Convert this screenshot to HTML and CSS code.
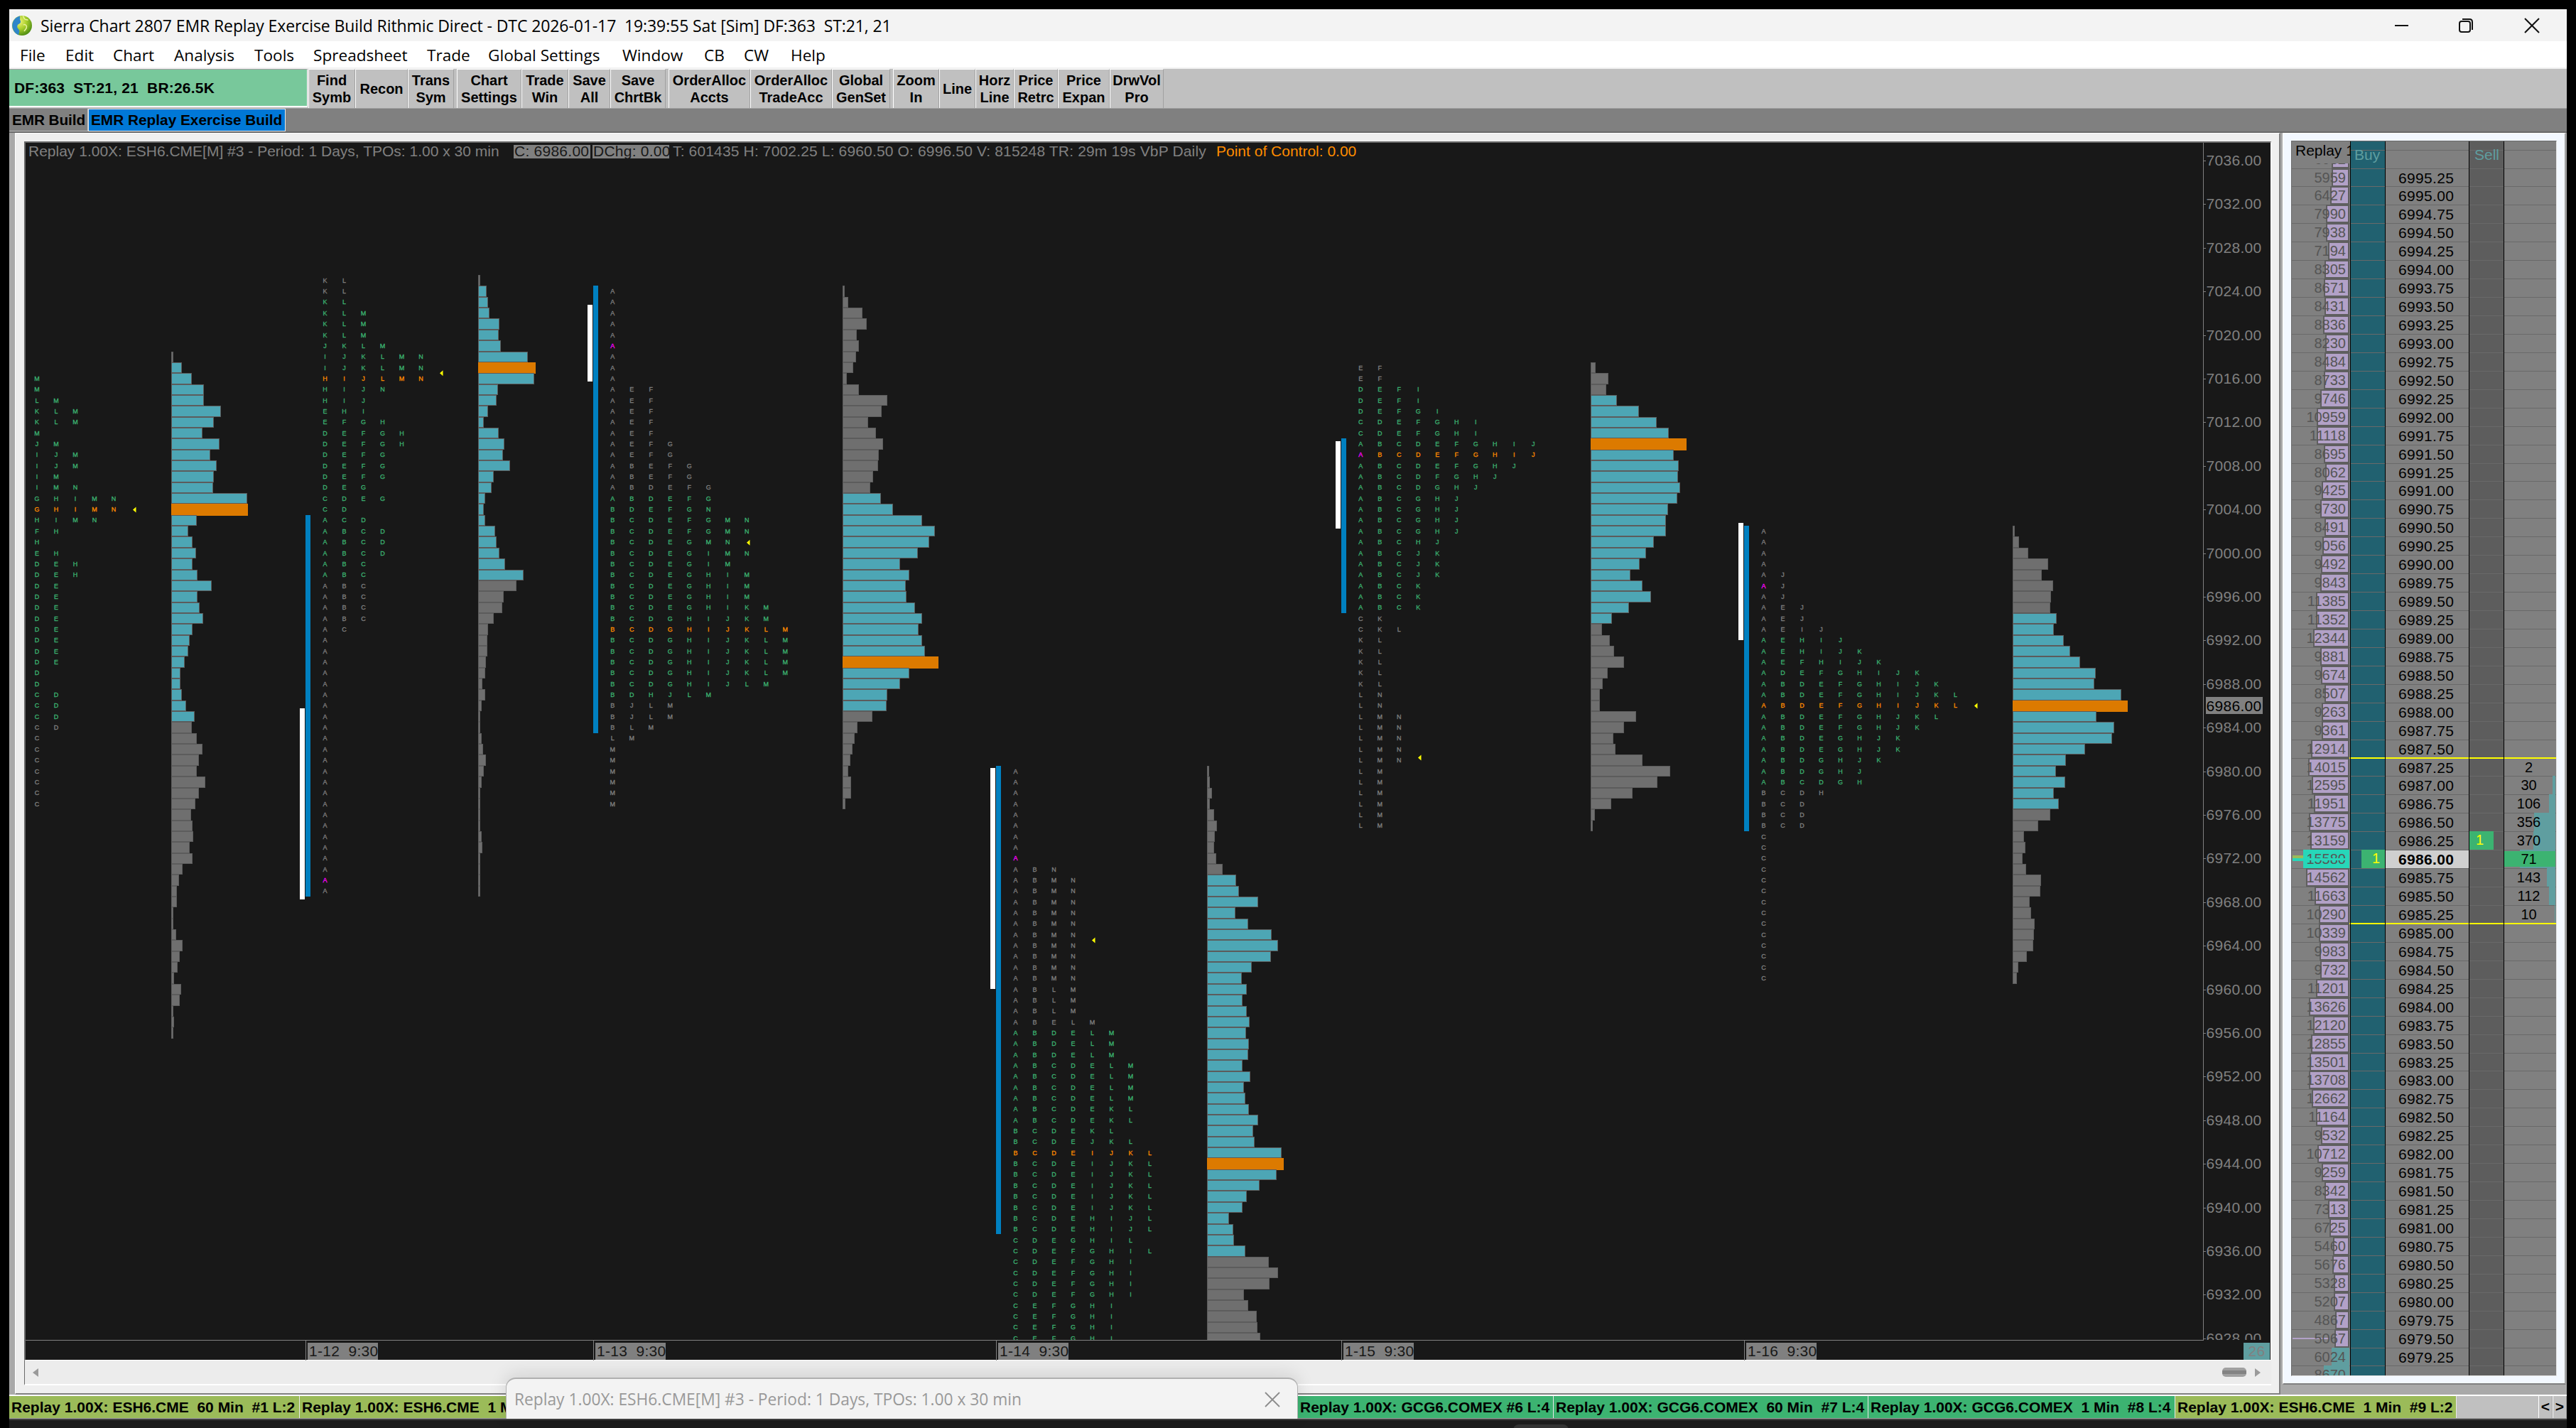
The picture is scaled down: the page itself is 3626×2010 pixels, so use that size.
FILE: index.html
```html
<!DOCTYPE html>
<html lang="en">
<head>
<meta charset="utf-8">
<title>Sierra Chart 2807</title>
<link rel="stylesheet" href="styles.css">
</head>
<body>
<div class="app">
  <header class="titlebar">
    <svg class="logo" width="30" height="30" viewBox="0 0 30 30">
      <defs><radialGradient id="globe" cx="35%" cy="30%" r="75%"><stop offset="0" stop-color="#f4f57a"/><stop offset=".5" stop-color="#a8cf2c"/><stop offset="1" stop-color="#4b8a12"/></radialGradient></defs>
      <circle cx="15" cy="15" r="14" fill="url(#globe)"/>
      <path d="M12 1.5C6 3 1.5 8 1.2 15c.3 6 4 11.5 9.3 13.4-.5-3 1.5-4 .5-7-1-2.5-3.5-3-2.5-6.5.8-2.5 3.5-2 4.5-4.5.8-2.5-1.5-3-.8-5.5z" fill="#2f86c9"/>
      <path d="M16 1.5c2 1.5 1 3 3 4.5s3 0 4.5 1.5M17 14c2-1 4 0 4.5 2.5S19 21 18 23" fill="none" stroke="#e9f2a0" stroke-width="1.5"/>
    </svg>
    <span class="title">Sierra Chart 2807 EMR Replay Exercise Build Rithmic Direct - DTC 2026-01-17&nbsp; 19:39:55 Sat [Sim] DF:363&nbsp; ST:21, 21</span>
    <svg class="winbtns" width="210" height="24" viewBox="0 0 210 24" fill="none" stroke="#111" stroke-width="2">
      <path d="M1 12h19"/>
      <rect x="92" y="6" width="15" height="15" rx="3"/><path d="M96 3h10q4 0 4 4v11"/>
      <path d="M184 2l20 20M204 2l-20 20"/>
    </svg>
  </header>
  <nav class="menu">
    <span>File</span><span>Edit</span><span>Chart</span><span>Analysis</span><span>Tools</span><span>Spreadsheet</span><span>Trade</span><span>Global Settings</span><span>Window</span><span>CB</span><span>CW</span><span>Help</span>
  </nav>
  <div class="toolbar">
    <div class="status">DF:363&nbsp; ST:21, 21&nbsp; BR:26.5K</div>
    <div class="btn w66">Find<br>Symb</div><div class="btn w74">Recon</div><div class="btn w65">Trans<br>Sym</div>
    <div class="btn w91 sep">Chart<br>Settings</div><div class="btn w66">Trade<br>Win</div><div class="btn w59">Save<br>All</div><div class="btn w78">Save<br>ChrtBk</div>
    <div class="btn w115 sep">OrderAlloc<br>Accts</div><div class="btn w115">OrderAlloc<br>TradeAcc</div><div class="btn w82">Global<br>GenSet</div>
    <div class="btn w65 sep">Zoom<br>In</div><div class="btn w51">Line</div><div class="btn w54">Horz<br>Line</div><div class="btn w62">Price<br>Retrc</div><div class="btn w73">Price<br>Expan</div><div class="btn w76">DrwVol<br>Pro</div>
  </div>
  <div class="books"><span class="book">EMR Build</span><span class="book active">EMR Replay Exercise Build</span></div>

  <main class="workspace">
    <section class="chart-window">
      <div class="chart-pane">
        <svg id="chart" width="3160" height="1714" viewBox="36 201 3160 1714"></svg>
        <div class="info">
          <span class="i1">Replay 1.00X: ESH6.CME[M] #3 - Period: 1 Days, TPOs: 1.00 x 30 min</span>
          <span class="box">C: 6986.00</span>
          <span class="box">DChg: 0.00</span>
          <span class="i2">T: 601435 H: 7002.25 L: 6960.50 O: 6996.50 V: 815248 TR: 29m 19s VbP Daily</span>
          <span class="poc">Point of Control: 0.00</span>
        </div>
      </div>
      <div class="scroll">
        <svg width="10" height="12" viewBox="0 0 10 12"><path d="M9 0v12L1 6z" fill="#9a9a9a"/></svg>
        <i class="thumb"></i>
        <svg width="10" height="12" viewBox="0 0 10 12"><path d="M1 0v12L9 6z" fill="#9a9a9a"/></svg>
      </div>
    </section>
    <section class="dom-window">
      <div class="dom">
        <div class="dom-head"><span class="c-vol">Replay 1.00X</span><span class="c-buy">Buy</span><span></span><span class="c-sell">Sell</span><span></span></div>
        <div id="ladder"></div>
      </div>
    </section>
  </main>

  <footer class="tabs">
    <span class="tab olive t1">Replay 1.00X: ESH6.CME&nbsp; 60 Min&nbsp; #1 L:2</span>
    <span class="tab olive t2">Replay 1.00X: ESH6.CME&nbsp; 1 Min</span>
    <span class="tab green t6">Replay 1.00X: GCG6.COMEX #6 L:4</span>
    <span class="tab green t7">Replay 1.00X: GCG6.COMEX&nbsp; 60 Min&nbsp; #7 L:4</span>
    <span class="tab green t8">Replay 1.00X: GCG6.COMEX&nbsp; 1 Min&nbsp; #8 L:4</span>
    <span class="tab olive t9">Replay 1.00X: ESH6.CME&nbsp; 1 Min&nbsp; #9 L:2</span>
    <span class="arrow first">&lt;</span><span class="arrow">&gt;</span>
  </footer>
</div>
<div class="taskbar"><i></i></div>
<div class="popup"><span>Replay 1.00X: ESH6.CME[M] #3 - Period: 1 Days, TPOs: 1.00 x 30 min</span>
  <svg width="22" height="22" viewBox="0 0 22 22" stroke="#8c8c8c" stroke-width="1.8"><path d="M1 1l20 20M21 1L1 21"/></svg>
</div>
<script src="script.js"></script>
</body>
</html>
```
FILE: styles.css
```css
* { box-sizing: border-box; }
body { margin: 0; width: 3626px; height: 2010px; background: #000; overflow: hidden; font-family: "Liberation Sans", Arial, sans-serif; font-size: 21px; color: #000; position: relative; }
.app { margin: 0 13px; padding-top: 13px; height: 1997px; width: 3600px; display: flex; flex-direction: column; }

.titlebar { height: 45px; background: #f3f3f3; display: flex; align-items: center; padding-left: 3px; font-family: "Open Sans", "Noto Sans", sans-serif; font-size: 23px; }
.title { margin-left: 11px; white-space: nowrap; letter-spacing: -.095px; }
.winbtns { margin-left: auto; margin-right: 33px; }
.menu { height: 39px; background: #fff; border-bottom: 2px solid #f0f0f0; padding: 2px 0 0 15px; display: grid; grid-template-columns: 64px 67px 86px 113px 83px 160px 86px 189px 115px 56px 66px 80px; align-items: center; font-family: "Open Sans", "Noto Sans", sans-serif; font-size: 22.6px; }
.menu span { justify-self: start; white-space: nowrap; }

.toolbar { height: 56px; background: #c0c0c0; display: flex; font-weight: bold; font-size: 20px; line-height: 24px; white-space: nowrap; border-bottom: 1px solid #a0a0a0; }
.status { width: 420px; height: 54px; background: #78c89b; border-top: 1px solid #a0a0a0; border-right: 1px solid #fff; border-bottom: 2px solid #fff; padding: 14px 0 0 7px; margin-right: 1px; font-size: 21px; letter-spacing: .2px; }
.btn { display: flex; flex-direction: column; justify-content: center; text-align: center; border-left: 1px solid #fff; border-top: 1px solid #fff; border-right: 1px solid #a0a0a0; flex: none; padding-bottom: 1px; }
.btn.sep { margin-left: 4px; }
.w51 { width: 51px; } .w54 { width: 54px; } .w59 { width: 59px; } .w62 { width: 62px; } .w65 { width: 65px; } .w66 { width: 66px; }
.w73 { width: 73px; } .w74 { width: 74px; } .w76 { width: 76px; } .w78 { width: 78px; } .w82 { width: 82px; } .w91 { width: 91px; } .w115 { width: 115px; }

.books { height: 32px; background: #808080; display: flex; font-weight: bold; font-size: 20.8px; line-height: 31px; white-space: nowrap; }
.book { width: 111px; padding-left: 4px; border-right: 1px solid #c0c0c0; border-bottom: 1px solid #c0c0c0; height: 32px; letter-spacing: -.1px; }
.book.active { width: 278px; padding-left: 3px; line-height: 30px; background: #0078d7; border: 1px solid #e8e8e8; letter-spacing: 0; }

.workspace { height: 1778px; background: #a9a9a9; border-top: 2px solid #696969; display: flex; padding-left: 8px; align-items: flex-start; }
.chart-window { width: 3189px; height: 1776px; background: #efefef; border: 1px solid #fff; border-right: 2px solid #808080; border-bottom: 2px solid #808080; padding: 11px 12px 0 12px; }
.chart-pane { width: 3163px; height: 1716px; border: 2px solid #696969; border-right: 1px solid #fff; border-bottom: 1px solid #fff; position: relative; background: #181818; }
.chart-pane svg { display: block; }
.info { position: absolute; left: 4px; top: 2px; display: flex; color: #808080; white-space: nowrap; line-height: 20px; height: 20px; }
.info .i1 { width: 683px; }
.info .box { width: 108px; height: 19px; background: #808080; color: #181818; padding-left: 1px; margin: 1px 3px 0 0; line-height: 18px; letter-spacing: .25px; }
.info .i2 { width: 767px; padding-left: 2px; letter-spacing: .15px; }
.info .poc { color: #ff8c00; }
.scroll { width: 3163px; height: 35px; border-left: 1px solid #696969; background: #ececec; border-bottom: 2px solid #fff; display: flex; align-items: center; padding: 0 14px 0 10px; }
.thumb { margin-left: auto; margin-right: 11px; width: 34px; height: 13px; border-radius: 5px; background: linear-gradient(#a0a0a0 0 4px, #838383 4px 9px, #a0a0a0 9px); }

.dom-window { margin-left: 3px; width: 399px; height: 1762px; background: #f3f8ff; border: 1px solid #fff; border-right: 2px solid #a0a0a0; border-bottom: 2px solid #808080; padding: 10px 0 0 11px; }
.dom { width: 374px; height: 1739px; border-left: 1px solid #696969; border-top: 1px solid #696969; border-right: 1px solid #e3e3e3; border-bottom: 1px solid #e3e3e3; background: linear-gradient(90deg, #808080 0 82px, #216170 82px 131px, #808080 131px 249px, #5d5d5d 249px 298px, #808080 298px); overflow: hidden; position: relative; }
/* column dividers stay above the row lines */
.dom::after { content: ""; position: absolute; inset: 0; z-index: 3; background: linear-gradient(90deg, transparent 82px, #000 82px 83px, transparent 83px 131px, #000 131px 132px, transparent 132px 249px, #000 249px 250px, transparent 250px 298px, #000 298px 299px, transparent 299px); }
.dom-head { display: grid; grid-template-columns: 82px 50px 118px 49px 73px; height: 25px; line-height: 25px; position: relative; z-index: 2; }
.c-vol { padding-left: 5px; overflow: hidden; white-space: nowrap; background: #808080; }
.c-buy, .c-sell { color: #5f9ea0; padding: 6px 0 0 6px; }
.c-sell { padding-left: 7px; }
#ladder { margin-top: -13.4px; }
.row { display: grid; grid-template-columns: 82px 50px 118px 49px 73px; height: 25.94px; border-top: 1px solid #696969; line-height: 25px; position: relative; }
.row .vol { font-size: 20px; color: #555; text-align: right; padding-right: 6px; position: relative; }
.row .vol b { position: absolute; right: 1px; top: -1px; bottom: 0; background: #b2a1c7; border: 2px solid #5f5f5f; }
.row .vol.teal b { background: #5f9ea0; border: 0; }
.row .vol.mark b { background: #27d7b9; border: 0; }
.row .vol span, .row .size span { position: relative; }
.row .vol.mark::before { content: ""; position: absolute; left: 1px; top: 7px; width: 15px; height: 8px; background: linear-gradient(#9bbb59 50%, #27d7b9 50%); }
.row .vol.mark::after { content: ""; position: absolute; right: 1px; top: 11px; width: 64px; height: 3px; background: #27d7b9; z-index: 1; }
.row .vol.line::before { content: ""; position: absolute; left: 1px; top: 11px; width: 52px; height: 2px; background: #b2a1c7; }
.row .price { padding-left: 18px; letter-spacing: .32px; }
.row .price.last { font-weight: bold; background: #cfcfcf; }
.row .size { font-size: 20px; text-align: center; padding-right: 4px; position: relative; }
.row .size b { position: absolute; right: 1px; top: -1px; bottom: 0; background: #5f9ea0; }
.row .size.best::before { content: ""; position: absolute; left: 0; right: 1px; top: 1px; bottom: 2px; background: #3cb371; z-index: 1; }
.row .size span { z-index: 2; }
.order { background: #3cb371; color: #ff0; font-size: 20px; height: 26px; margin-top: -1px; width: 34px; padding-left: 15px; justify-self: end; }
.order.sell { justify-self: start; padding-left: 9px; }
.row.band::after { content: ""; position: absolute; left: 81px; right: 0; top: -2px; height: 2px; background: #ff0; z-index: 2; }

.tabs { height: 34px; background: #c0c0c0; border-top: 2px solid #fff; display: flex; font-weight: bold; font-size: 21px; line-height: 31px; white-space: nowrap; border-bottom: 1px solid #a0a0a0; }
.tab { padding-left: 3px; border-right: 1px solid #e8e8e8; flex: none; overflow: hidden; }
.olive { background: #9bbb59; } .green { background: #3cb371; }
.t1 { width: 409px; } .t2 { width: 1405px; } .t6 { width: 360px; } .t7 { width: 443px; } .t8 { width: 432px; } .t9 { width: 396px; }
.arrow { width: 20px; border-left: 1px solid #fff; border-right: 1px solid #a0a0a0; text-align: center; line-height: 30px; }
.arrow.first { margin-left: auto; }
.taskbar { height: 13px; width: 3600px; margin-left: 13px; background: #1c1c1c; border-top: 2px solid #404040; padding: 6px 0 0 2117px; }
.taskbar i { display: block; width: 78px; height: 10px; border-radius: 8px 8px 0 0; background: #333; }
.popup { position: absolute; left: 712px; top: 1939px; width: 1115px; height: 58px; background: #f3f3f3; border: 1px solid #b0b0b0; border-top: 2px solid #b0b0b0; border-bottom: 0; border-radius: 14px 14px 0 0; box-shadow: 0 -4px 24px rgba(0,0,0,.12); display: flex; align-items: center; justify-content: space-between; padding: 1px 24px 0 11px; color: #999; font-family: "Open Sans", "Noto Sans", sans-serif; font-size: 22.75px; white-space: nowrap; }
```
FILE: script.js
```js
const svg = document.getElementById("chart");
const PITCH = 15.35;
const yOf = p => 225.9 + (7036 - p) * PITCH;
const out = [];
const rect = (x, y, w, h, fill, extra = "") => out.push(`<rect x="${x}" y="${y}" width="${w}" height="${h}" fill="${fill}" ${extra}/>`);
const text = (x, y, s, fill, extra = "") => out.push(`<text x="${x}" y="${y}" fill="${fill}" ${extra}>${s}</text>`);

// v: bar lengths from the top price down, in units of 1/unit px
const profiles = [
  { x: 241, unit: 1.96, top: 7018, poc: 7004, va: [7017, 6985], v: [5,29,56,90,90,137,117,86,133,107,125,117,115,209,212,70,48,58,68,58,72,111,72,78,88,58,50,48,37,25,25,29,42,64,56,70,86,76,70,95,76,66,54,58,60,50,58,31,21,15,15,5,5,13,31,23,17,7,27,23,5,7,5] },
  { x: 673, unit: 1.96, top: 7025, poc: 7017, va: [7024, 6998], v: [6,23,27,32,58,56,62,138,159,154,54,50,28,15,56,72,68,89,44,38,19,15,19,48,50,58,74,125,105,70,66,44,27,25,25,21,19,11,19,9,5,5,9,13,21,15,9,5,5,5,5,9,11,5,5,5,5] },
  { x: 1186, unit: 2.529, top: 7024, poc: 6990, va: [7005, 6986], v: [7,20,71,86,50,58,48,38,15,58,159,139,91,119,144,129,126,109,98,136,179,283,329,308,268,205,238,225,227,258,283,270,283,293,341,238,205,159,157,106,53,43,35,28,20,30,30,10] },
  { x: 1699, unit: 3, top: 6980, poc: 6944, va: [6970, 6936], v: [9,12,21,12,30,42,33,30,39,66,123,135,216,120,174,273,300,270,189,147,168,150,168,180,165,177,174,150,183,156,162,177,216,195,201,315,324,294,222,168,150,93,111,114,162,261,300,264,156,174,210,213,225] },
  { x: 2239, unit: 2.8, top: 7017, poc: 7010, va: [7014, 6994], v: [20,70,62,104,191,261,308,378,328,347,345,353,342,305,297,297,249,219,193,157,205,238,151,84,45,76,93,132,67,48,37,37,179,132,90,98,205,314,263,165,81,17,9] },
  { x: 2833, unit: 2.45, top: 7002, poc: 6986, va: [6994, 6977], v: [7,22,54,122,100,139,132,130,152,142,176,198,233,286,282,375,397,289,350,343,250,184,149,181,142,159,130,88,39,44,34,46,98,95,59,64,76,73,71,49,19,15] }
];

// rows: letters from the top price down, "*n" repeats a row
const tpos = [
  { x: 52, top: 7016, poc: 7004, va: [7016, 6985], close: [187, 717.4], rows: "M*2 LM KLM*2 M JM IJM*2 IM IMN GHIMN*2 HIMN FH H EH DEH*2 DE*8 D*2 CD*4 C*7" },
  { x: 457.4, top: 7025, poc: 7016, va: [7023, 6998], open: 6970, close: [619, 525.2], rows: "KL*3 KLM*3 JKLM IJKLMN*2 HIJLMN HIJN HIJ EHI EFGH DEFGH*2 DEFG*3 DEG CDEG CD ACD ABCD*3 ABC*6 AC A*24", range: [430, 725, 1262], ib: [422, 997, 1266] },
  { x: 862.2, top: 7024, poc: 6993, va: [7005, 6987], open: 7019, close: [1051, 763.7], rows: "A*9 AEF*5 AEFG*2 ABEFG*2 ABDEFG*2 BDEFGN BCDEFGMN*2 BCDEGMN BCDEGIMN BCDEGIM BCDEGHIM*3 BCDEGHIKM BCDGHIJKM BCDGHIJKLM*5 BCDGHIJLM BDHJLM BJLM*2 BLM LM M*6", range: [835, 402, 1032], ib: [827, 429, 537] },
  { x: 1429.5, top: 6980, poc: 6945, va: [6956, 6928], open: 6972, close: [1537, 1323.6], rows: "A*9 ABN ABMN*10 ABLM*3 ABELM ABDELM*3 ABCDELM*4 ABCDEKL*2 BCDEKL BCDEJKL BCDEIJKL*6 BCDEHIJL*2 CDEGHIL CDEFGHIL CDEFGHI*4 CEFGHI*4", range: [1402, 1078, 1737], ib: [1394, 1081, 1392] },
  { x: 1915.2, top: 7017, poc: 7009, va: [7015, 6995], open: 7009, close: [1996, 1066.4], rows: "EF*2 DEFI*2 DEFGI CDEFGHI*2 ABCDEFGHIJ*2 ABCDEFGHJ ABCDFGHJ ABCDGHJ ABCGHJ*4 ABCHJ ABCJK*3 ABCK*3 CK CKL KL*5 LN*2 LMN*5 LM*6", range: [1888, 617, 863], ib: [1880, 621, 744] },
  { x: 2482.4, top: 7002, poc: 6986, va: [6992, 6979], open: 6997, close: [2779, 993.4], rows: "A*4 AJ*3 AEJ*2 AEIJ AEHIJ AEHIJK AEFHIJK ADEFGHIJK ABDEFGHIJK ABDEFGHIJKL*2 ABDEFGHJKL ABDEFGHJK ABDEGHJK*2 ABDGHJK ABDGHJ ABCDGH BCDH BCD*3 C*14", range: [2455, 740, 1170], ib: [2447, 736, 901] }
];

out.push('<defs><clipPath id="plot"><rect x="36" y="201" width="3160" height="1685"/></clipPath></defs><g clip-path="url(#plot)">');
for (const p of profiles) {
  p.v.forEach((v, i) => {
    const price = p.top - i;
    const y0 = Math.round(yOf(price + 0.5)), y1 = Math.round(yOf(price - 0.5));
    const w = Math.round(v / p.unit);
    if (price === p.poc) return rect(p.x, y0, w, y1 - y0 + 1, "#dc7a00");
    const inVa = price <= p.va[0] && price >= p.va[1];
    rect(p.x + 0.5, y0 + 0.5, Math.max(w - 1, 1), y1 - y0 - 1, inVa ? "#4da6b5" : "#6f6f6f", 'stroke="#5c5c5c"');
  });
}
for (const t of tpos) {
  if (t.range) {
    rect(t.range[0], t.range[1], 7, t.range[2] - t.range[1], "#0080c0");
    rect(t.ib[0], t.ib[1], 7, t.ib[2] - t.ib[1], "#fff");
  }
  let price = t.top;
  for (const token of t.rows.split(" ")) {
    const [letters, n = 1] = token.split("*");
    for (let k = 0; k < n; k++, price--) {
      const base = price === t.poc ? "#ff8c00" : price <= t.va[0] && price >= t.va[1] ? "#3cb371" : "#808080";
      [...letters].forEach((c, i) => {
        const fill = i === 0 && price === t.open ? "#f0f" : base;
        text(t.x + i * 27, Math.round(yOf(price) + 3), c, fill, `class="tpo" stroke="${fill}"`);
      });
    }
  }
  const [cx, cy] = t.close;
  out.push(`<path d="M${cx} ${cy}l4.5 -4v8z" fill="#ff0"/>`);
}
for (let p = 7036; p >= 6928; p -= 4) {
  const y = yOf(p);
  rect(3102, Math.round(y), 3, 1, "#808080");
  text(3105.5, Math.round(y + 7), p + ".00", "#808080");
}
rect(3105, 981, 80, 24, "#808080");
text(3105.5, 1001, "6986.00", "#000");
out.push("</g>");
rect(3101, 201, 1, 1686, "#808080");
rect(36, 1886, 3066, 1, "#808080");
[["1-12", 430], ["1-13", 835], ["1-14", 1402], ["1-15", 1888], ["1-16", 2455]].forEach(([d, x]) => {
  rect(x, 1887, 1, 28, "#808080");
  rect(x + 3, 1890, 99, 24, "#808080");
  text(x + 5, 1909, d + "\u00a0 9:30", "#181818");
});
rect(3158, 1890, 37, 24, "#5f9ea0");
text(3164.5, 1909, "26", "#808080");
svg.innerHTML = `<style>text{font:21px "Liberation Sans",Arial,sans-serif;letter-spacing:.3px}text.tpo{font-size:9px;letter-spacing:0;text-anchor:middle;stroke-width:.3px}</style>` + out.join("");

const volumes = [6082,5959,6427,7990,7938,7194,8305,8671,8431,8836,8230,8484,8733,9746,10959,11118,8695,8062,9425,9730,8491,9056,9492,9843,11385,11352,12344,9881,9674,8507,9263,9361,12914,14015,12595,11951,13775,13159,15580,14562,11663,10290,10339,9983,9732,11201,13626,12120,12855,13501,13708,12662,11164,9532,10712,9259,8342,7313,6725,5460,5676,5328,5207,4867,5067,6024,8670];
// resting size and bar width per price
const depth = { 6987.25: [2, 0], 6987: [30, 4], 6986.75: [106, 9], 6986.5: [356, 30], 6986.25: [370, 31], 6986: [71, 50], 6985.75: [143, 12], 6985.5: [112, 9], 6985.25: [10, 1] };
document.getElementById("ladder").innerHTML = volumes.map((v, i) => {
  const price = 6995.5 - i * 0.25;
  const cls = price === 6986 ? "mark" : price < 6979.5 ? "teal" : price === 6979.5 ? "line" : "";
  const band = price === 6987.25 || price === 6985 ? "band" : "";
  const d = depth[price];
  const shown = price <= 6995.25 && price >= 6979.25;
  return `<div class="row ${band}"><span class="vol ${cls}"><b style="width:${Math.round(v * 0.00417)}px"></b><span>${v}</span></span>` +
    `<span class="${price === 6986 ? "order" : ""}">${price === 6986 ? 1 : ""}</span>` +
    `<span class="price ${price === 6986 ? "last" : ""}">${shown ? price.toFixed(2) : ""}</span>` +
    `<span class="${price === 6986.25 ? "order sell" : ""}">${price === 6986.25 ? 1 : ""}</span>` +
    `<span class="size ${price === 6986 ? "best" : ""}">${d ? `<b style="width:${d[1]}px"></b><span>${d[0]}</span>` : ""}</span></div>`;
}).join("");
```
